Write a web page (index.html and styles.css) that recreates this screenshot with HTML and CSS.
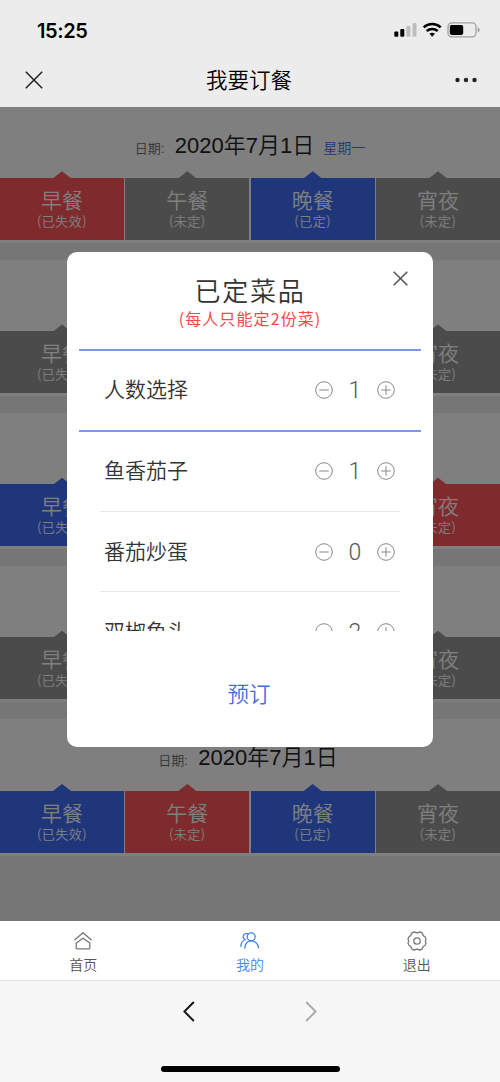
FILE: index.html
```html
<!DOCTYPE html>
<html lang="zh-CN">
<head>
<meta charset="utf-8">
<title>我要订餐</title>
<link rel="stylesheet" href="styles.css">
</head>
<body>
<div class="app">
  <header class="top">
    <div class="status">
      <span class="clock">15:25</span>
      <svg class="status-icons" width="88" height="18" viewBox="0 0 88 18">
        <rect x="0.3" y="10.5" width="4" height="5.3" rx="1"/>
        <rect x="6.3" y="8" width="4" height="7.8" rx="1"/>
        <rect x="12.4" y="5" width="4" height="10.8" rx="1" fill="#bdbdbd"/>
        <rect x="18.5" y="2" width="4" height="13.8" rx="1" fill="#bdbdbd"/>
        <path d="M29.7 6.4a12.5 12.5 0 0 1 17 0M32.7 10a8.2 8.2 0 0 1 11 0" fill="none" stroke="#000" stroke-width="2.5"/>
        <path d="M35.5 12.8a4.3 4.3 0 0 1 5.4 0l-2.7 2.9z"/>
        <rect x="54" y="1.9" width="28" height="14" rx="3.8" fill="none" stroke="#a0a0a0" stroke-width="1.3"/>
        <rect x="55.8" y="3.9" width="13.4" height="10" rx="1.8"/>
        <path d="M83.8 6.6q1.8 1 1.8 2.4t-1.8 2.4z" fill="#8e8e8e"/>
      </svg>
    </div>
    <div class="navbar">
      <svg width="18" height="18" viewBox="0 0 18 18"><path d="M.8.8l16.4 16.4M17.2.8L.8 17.2" stroke="#222" stroke-width="1.5" fill="none"/></svg>
      <h1 class="nav-title">我要订餐</h1>
      <svg width="22" height="6" viewBox="0 0 22 6" fill="#222"><circle cx="2.5" cy="3" r="2.2"/><circle cx="11" cy="3" r="2.2"/><circle cx="19.5" cy="3" r="2.2"/></svg>
    </div>
  </header>

  <main class="main">
    <section class="day">
      <div class="date"><span class="label">日期:</span><span class="value">2020年7月1日</span><span class="week">星期一</span></div>
      <div class="meals">
        <div class="meal red"><b>早餐</b><i>(已失效)</i></div><div class="meal"><b>午餐</b><i>(未定)</i></div><div class="meal blue"><b>晚餐</b><i>(已定)</i></div><div class="meal"><b>宵夜</b><i>(未定)</i></div>
      </div>
    </section>
    <section class="day">
      <div class="date"></div>
      <div class="meals">
        <div class="meal"><b>早餐</b><i>(已失效)</i></div><div class="meal"></div><div class="meal"></div><div class="meal"><b>宵夜</b><i>(未定)</i></div>
      </div>
    </section>
    <section class="day">
      <div class="date"></div>
      <div class="meals">
        <div class="meal blue"><b>早餐</b><i>(已失效)</i></div><div class="meal"></div><div class="meal"></div><div class="meal red"><b>宵夜</b><i>(未定)</i></div>
      </div>
    </section>
    <section class="day">
      <div class="date"></div>
      <div class="meals">
        <div class="meal"><b>早餐</b><i>(已失效)</i></div><div class="meal"></div><div class="meal"></div><div class="meal"><b>宵夜</b><i>(未定)</i></div>
      </div>
    </section>
    <section class="day">
      <div class="date short"><span class="label">日期:</span><span class="value">2020年7月1日</span></div>
      <div class="meals">
        <div class="meal blue"><b>早餐</b><i>(已失效)</i></div><div class="meal red"><b>午餐</b><i>(未定)</i></div><div class="meal blue"><b>晚餐</b><i>(已定)</i></div><div class="meal"><b>宵夜</b><i>(未定)</i></div>
      </div>
    </section>

    <div class="mask">
      <div class="dialog">
        <svg class="close" width="15" height="15" viewBox="0 0 15 15"><path d="M.7.7l13.6 13.6M14.3.7L.7 14.3" stroke="#555" stroke-width="1.6" fill="none"/></svg>
        <div class="dialog-head">
          <h2>已定菜品</h2>
          <p>(每人只能定2份菜)</p>
        </div>
        <div class="row people">
          <span class="name">人数选择</span>
          <div class="stepper">
            <svg class="btn" viewBox="0 0 18 18"><circle cx="9" cy="9" r="8.3"/><path d="M4.2 9h9.6"/></svg>
            <span class="num">1</span>
            <svg class="btn" viewBox="0 0 18 18"><circle cx="9" cy="9" r="8.3"/><path d="M4.2 9h9.6M9 4.2v9.6"/></svg>
          </div>
        </div>
        <div class="dishes">
          <div class="row">
            <span class="name">鱼香茄子</span>
            <div class="stepper">
              <svg class="btn" viewBox="0 0 18 18"><circle cx="9" cy="9" r="8.3"/><path d="M4.2 9h9.6"/></svg>
              <span class="num">1</span>
              <svg class="btn" viewBox="0 0 18 18"><circle cx="9" cy="9" r="8.3"/><path d="M4.2 9h9.6M9 4.2v9.6"/></svg>
            </div>
          </div>
          <div class="row">
            <span class="name">番茄炒蛋</span>
            <div class="stepper">
              <svg class="btn" viewBox="0 0 18 18"><circle cx="9" cy="9" r="8.3"/><path d="M4.2 9h9.6"/></svg>
              <span class="num">0</span>
              <svg class="btn" viewBox="0 0 18 18"><circle cx="9" cy="9" r="8.3"/><path d="M4.2 9h9.6M9 4.2v9.6"/></svg>
            </div>
          </div>
          <div class="row">
            <span class="name">双椒鱼头</span>
            <div class="stepper">
              <svg class="btn" viewBox="0 0 18 18"><circle cx="9" cy="9" r="8.3"/><path d="M4.2 9h9.6"/></svg>
              <span class="num">2</span>
              <svg class="btn" viewBox="0 0 18 18"><circle cx="9" cy="9" r="8.3"/><path d="M4.2 9h9.6M9 4.2v9.6"/></svg>
            </div>
          </div>
        </div>
        <div class="submit">预订</div>
      </div>
    </div>
  </main>

  <nav class="tabbar">
    <div class="tab">
      <svg width="20" height="20" viewBox="0 0 20 20"><path d="M1.8 8.8L10 1.7l8.2 7.1M3.2 12L10 7.2l6.8 4.8v5q0 .9-.9.9H4.1q-.9 0-.9-.9z"/></svg>
      <span>首页</span>
    </div>
    <div class="tab active">
      <svg width="20" height="20" viewBox="0 0 20 20"><circle cx="11.2" cy="5.8" r="4"/><path d="M4.800 17.200c.3-4.500 2.800-7.400 6.400-7.400s7 2.800 7.300 7M8.200 3.100a3.100 3.100 0 1 0-2.900 5.400M.9 15.400c.2-3.100 1.400-6 4.400-6.900"/></svg>
      <span>我的</span>
    </div>
    <div class="tab">
      <svg width="20" height="20" viewBox="0 0 20 20"><circle cx="10" cy="10" r="3.200"/><path d="M7 .9Q10 2.600 13 .9L15.200 2.100Q15.600 4.700 18.200 6L19 8.100Q17.600 10 19 12L18.200 14Q15.600 15.200 15.200 17.900L13 19.100Q10 17.400 7 19.100L4.800 17.900Q4.400 15.200 1.800 14L1 12Q2.400 10 1 8.100L1.800 6Q4.400 4.700 4.800 2.100Z"/></svg>
      <span>退出</span>
    </div>
  </nav>

  <footer class="browser">
    <div class="arrows">
      <svg width="12" height="21" viewBox="0 0 12 21"><path d="M10.800 1L1.400 10.500l9.400 9.500" stroke="#111"/></svg>
      <svg width="12" height="21" viewBox="0 0 12 21"><path d="M1.200 1l9.400 9.500L1.200 20" stroke="#aaa"/></svg>
    </div>
    <div class="home"></div>
  </footer>
</div>
</body>
</html>
```
FILE: styles.css
```css
* { box-sizing: border-box; margin: 0; padding: 0; }
body {
  width: 500px;
  font-family: "Liberation Sans", "Noto Sans CJK SC", sans-serif;
  font-weight: 350;
  background: #f7f7f7;
}
svg { display: block; flex: none; }
.app { display: flex; flex-direction: column; height: 1082px; overflow: hidden; }

.top { height: 106.6px; background: #ececec; flex: none; }
.status { height: 53px; padding: 9px 18px 0 37px; display: flex; justify-content: space-between; }
.clock { font: 600 20px/44px Inter, sans-serif; letter-spacing: -0.4px; }
.status-icons { margin-top: 12px; }
.navbar { height: 54px; padding: 0 23px 0 25px; display: flex; align-items: center; justify-content: space-between; }
.nav-title { font-size: 21.5px; font-weight: inherit; color: #000; line-height: 54px; padding-top: 1px; }

.main { position: relative; height: 814px; flex: none; background: #ececec; overflow: hidden; }
.day { height: 136.2px; margin-bottom: 17px; background: #fff; }
.date { height: 71.2px; padding-top: 19px; display: flex; justify-content: center; align-items: baseline; line-height: 40px; }
.date.short { padding-right: 4px; }
.label { font-size: 13px; color: #666; width: 40px; }
.value { font-size: 22px; color: #222; }
.week { font-size: 14px; color: #3f6cf6; margin-left: 9px; }
.meals { display: grid; grid-template-columns: repeat(4, 1fr); gap: 1.3px; height: 62px; }
.meal { --tone: #979797; position: relative; background: var(--tone); color: #fff; text-align: center; padding-top: 10px; }
.meal::before {
  content: ""; position: absolute; left: 50%; top: -6.5px; width: 18px; height: 7px; margin-left: -9px;
  background: var(--tone); clip-path: polygon(50% 0, 100% 100%, 0 100%);
}
.meal.red { --tone: #ff5458; }
.meal.blue { --tone: #3f6cf6; }
.meal b { display: block; font-size: 21px; font-weight: inherit; line-height: 25px; }
.meal i { display: block; font-family: "Noto Sans CJK SC", sans-serif; font-size: 13px; font-style: normal; line-height: 15px; letter-spacing: 0.5px; }

.mask { position: absolute; inset: 0; background: rgba(0, 0, 0, 0.5); padding: 145px 67px 0; }
.dialog { position: relative; height: 495.5px; background: #fff; border-radius: 10px; padding: 0 12px; }
.close { position: absolute; right: 25px; top: 19px; }
.dialog-head { height: 97px; padding-top: 23px; text-align: center; }
.dialog-head h2 { font-size: 26px; font-weight: inherit; color: #333; line-height: 35px; letter-spacing: 1.7px; }
.dialog-head p { font-family: "Noto Sans CJK SC", sans-serif; font-size: 16px; font-weight: 400; color: #f8474a; line-height: 16px; letter-spacing: 1.1px; }
.row { height: 80px; padding: 0 5px 0 4px; display: flex; align-items: center; justify-content: space-between; color: #333; }
.name { font-size: 21px; line-height: 30px; }
.people { height: 83px; padding: 0 26px 0 25px; border: solid #7d97ea; border-width: 2px 0; }
.dishes { height: 199.6px; margin-top: -0.6px; overflow: hidden; padding: 0 21px; }
.dishes .row + .row { border-top: 1px solid #e8e8e8; }
.stepper { display: flex; align-items: center; color: #555; }
.num { width: 44px; text-align: center; font-family: Roboto, sans-serif; font-size: 23px; line-height: 30px; padding-top: 2px; }
.btn { width: 18px; height: 18px; fill: none; stroke: #888; stroke-width: 1; }
.submit { margin: 43px 2px 0 0; text-align: center; font-size: 21.5px; line-height: 42px; color: #3f6ce6; }

.tabbar { height: 60.6px; flex: none; background: #fff; border-bottom: 1px solid #dedede; display: flex; }
.tab { flex: 1; display: flex; flex-direction: column; align-items: center; padding-top: 10px; color: #555; font-size: 14px; line-height: 20px; }
.tab span { margin-top: 4px; }
.tab svg { fill: none; stroke: #777; stroke-width: 1.3; stroke-linejoin: round; stroke-linecap: round; }
.tab.active { color: #4285f4; }
.tab.active svg { stroke: #4285f4; }

.browser { flex: 1; background: #f7f7f7; padding-top: 20px; }
.arrows { display: flex; justify-content: center; gap: 110px; }
.arrows svg { fill: none; stroke-width: 1.9; }
.home { width: 179px; height: 6px; border-radius: 3px; background: #000; margin: 44px auto 0; }
```
